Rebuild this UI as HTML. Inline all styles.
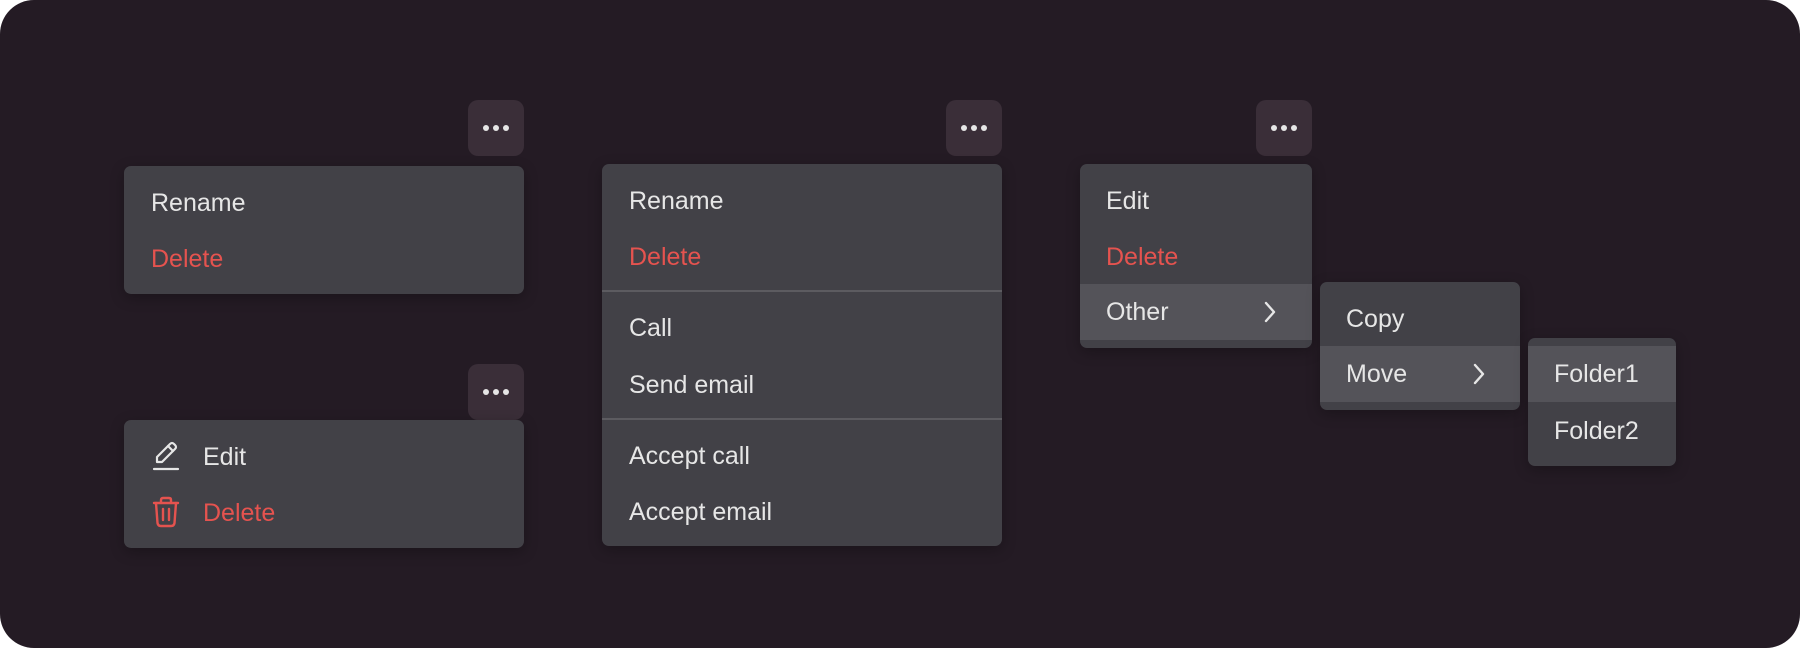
<!DOCTYPE html>
<html><head><style>
*{margin:0;padding:0;box-sizing:border-box}
body{width:1800px;height:648px;background:#fff;overflow:hidden;font-family:"Liberation Sans",sans-serif}
.bg{position:absolute;left:0;top:0;width:1800px;height:648px;background:#241b24;border-radius:34px}
.btn{position:absolute;width:56px;height:56px;background:#3a2e38;border-radius:10px}
.btn i{position:absolute;top:25px;width:6px;height:6px;border-radius:3px;background:#e6e6e6}
.m{position:absolute;background:#424147;border-radius:7px;overflow:hidden;box-shadow:0 4px 14px rgba(0,0,0,.25)}
.t{position:absolute;font-size:25px;color:#e6e6e6;line-height:30px;white-space:nowrap}
.r{color:#e5534f}
.hl{position:absolute;background:#545359}
.dv{position:absolute;height:2px;background:#5c5b60}
.ch{position:absolute}
</style></head><body>
<div class="bg"></div>

<div class="btn" style="left:468px;top:100px"><i style="left:15px"></i><i style="left:25px"></i><i style="left:35px"></i></div>
<div class="btn" style="left:468px;top:364px"><i style="left:15px"></i><i style="left:25px"></i><i style="left:35px"></i></div>
<div class="btn" style="left:946px;top:100px"><i style="left:15px"></i><i style="left:25px"></i><i style="left:35px"></i></div>
<div class="btn" style="left:1256px;top:100px;width:56px"><i style="left:15px"></i><i style="left:25px"></i><i style="left:35px"></i></div>

<div class="m" style="left:124px;top:166px;width:400px;height:128px"></div>
<div class="t" style="left:151px;top:188px">Rename</div>
<div class="t r" style="left:151px;top:244px">Delete</div>

<div class="m" style="left:124px;top:420px;width:400px;height:128px"></div>
<svg style="position:absolute;left:152px;top:440px" width="28" height="32" viewBox="0 0 28 32" fill="none" stroke="#e6e6e6" stroke-width="2.2" stroke-linecap="round" stroke-linejoin="round"><path d="M5 22 L5 17 L18 4 Q20 2 22 4 L23 5 Q25 7 23 9 L10 22 Z"/><path d="M16 6 L21 11"/><path d="M2 29 H26"/></svg>
<div class="t" style="left:203px;top:442px">Edit</div>
<svg style="position:absolute;left:152px;top:496px" width="28" height="32" viewBox="0 0 28 32" fill="none" stroke="#e5534f" stroke-width="2.4" stroke-linecap="round" stroke-linejoin="round"><path d="M2 7 H26"/><path d="M9 7 V4 Q9 2 11 2 H17 Q19 2 19 4 V7"/><path d="M4 7 L5.5 27 Q6 30 9 30 H19 Q22 30 22.5 27 L24 7"/><path d="M11 13 V24 M17 13 V24"/></svg>
<div class="t r" style="left:203px;top:498px">Delete</div>

<div class="m" style="left:602px;top:164px;width:400px;height:382px"></div>
<div class="dv" style="left:602px;top:290px;width:400px"></div>
<div class="dv" style="left:602px;top:418px;width:400px"></div>
<div class="t" style="left:629px;top:186px">Rename</div>
<div class="t r" style="left:629px;top:242px">Delete</div>
<div class="t" style="left:629px;top:313px">Call</div>
<div class="t" style="left:629px;top:370px">Send email</div>
<div class="t" style="left:629px;top:441px">Accept call</div>
<div class="t" style="left:629px;top:497px">Accept email</div>

<div class="m" style="left:1080px;top:164px;width:232px;height:184px"><div class="hl" style="left:0;top:120px;width:232px;height:56px"></div></div>
<div class="t" style="left:1106px;top:186px">Edit</div>
<div class="t r" style="left:1106px;top:242px">Delete</div>
<div class="t" style="left:1106px;top:297px">Other</div>
<svg class="ch" style="left:1262px;top:299px" width="16" height="26" viewBox="0 0 16 26" fill="none" stroke="#e6e6e6" stroke-width="2.4" stroke-linecap="round" stroke-linejoin="round"><path d="M4 4 L12 13 L4 22"/></svg>

<div class="m" style="left:1320px;top:282px;width:200px;height:128px"><div class="hl" style="left:0;top:64px;width:200px;height:56px"></div></div>
<div class="t" style="left:1346px;top:304px">Copy</div>
<div class="t" style="left:1346px;top:359px">Move</div>
<svg class="ch" style="left:1471px;top:361px" width="16" height="26" viewBox="0 0 16 26" fill="none" stroke="#e6e6e6" stroke-width="2.4" stroke-linecap="round" stroke-linejoin="round"><path d="M4 4 L12 13 L4 22"/></svg>

<div class="m" style="left:1528px;top:338px;width:148px;height:128px"><div class="hl" style="left:0;top:8px;width:148px;height:56px"></div></div>
<div class="t" style="left:1554px;top:359px">Folder1</div>
<div class="t" style="left:1554px;top:416px">Folder2</div>
</body></html>
